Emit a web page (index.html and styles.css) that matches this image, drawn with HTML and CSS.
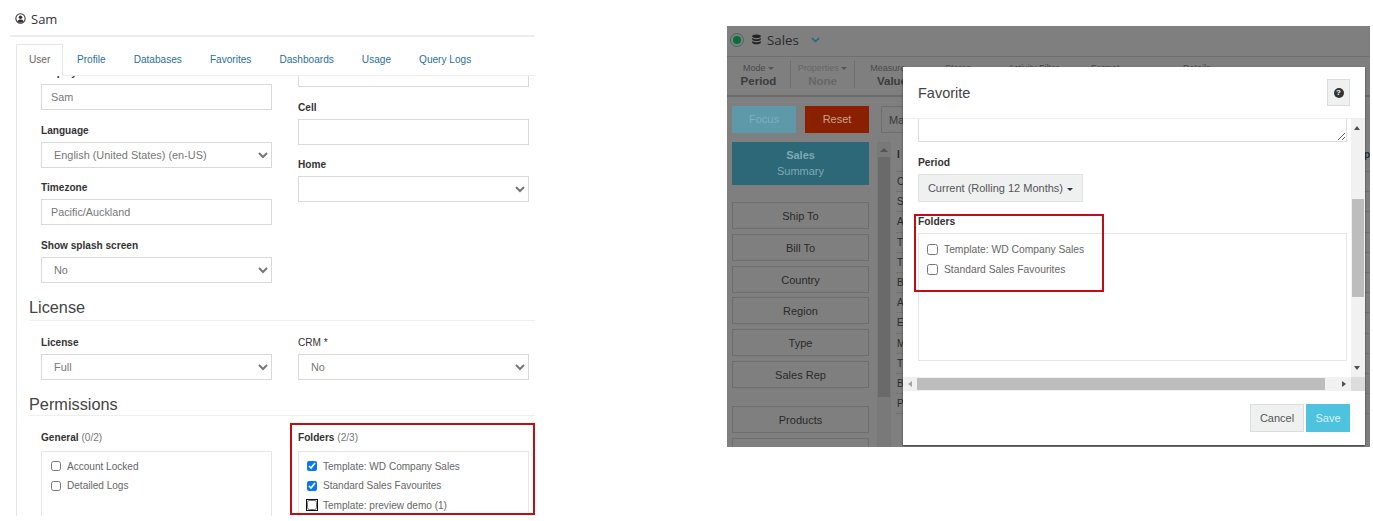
FILE: index.html
```html
<!DOCTYPE html>
<html>
<head>
    <title>User and Favorite</title>
    <link rel="stylesheet" href="styles.css">
</head>
<body>
    <div class="user-panel">
        <div class="user-title">
            <svg class="user-icon" viewBox="0 0 16 16"><circle cx="8" cy="8" r="6.8" fill="none" stroke="#333" stroke-width="1.5"/><circle cx="8" cy="6.2" r="2.6" fill="#333"/><path d="M3.4 12.4c1-2 2.6-2.9 4.6-2.9s3.600.9 4.600 2.900c-1.300 1.100-2.800 1.700-4.600 1.700s-3.300-.6-4.600-1.700z" fill="#333"/></svg>
            <span>Sam</span>
        </div>
        <div class="tabs">
            <a class="tab active">User</a>
            <a class="tab">Profile</a>
            <a class="tab">Databases</a>
            <a class="tab">Favorites</a>
            <a class="tab">Dashboards</a>
            <a class="tab">Usage</a>
            <a class="tab">Query Logs</a>
        </div>
        <div class="tab-pane">
            <div class="pane-inner">
                <div class="form-row first-row">
                    <div class="form-col">
                        <div class="field"><label>Display name</label><input type="text" value="Sam"></div>
                        <div class="field"><label>Language</label><select><option>English (United States) (en-US)</option></select></div>
                        <div class="field"><label>Timezone</label><input type="text" value="Pacific/Auckland"></div>
                        <div class="field"><label>Show splash screen</label><select><option>No</option></select></div>
                    </div>
                    <div class="form-col right-col">
                        <div class="field"><label>Phone</label><input type="text"></div>
                        <div class="field"><label>Cell</label><input type="text"></div>
                        <div class="field"><label>Home</label><select><option></option></select></div>
                    </div>
                </div>
                <h2 class="section-title license-title">License</h2>
                <div class="form-row">
                    <div class="form-col">
                        <div class="field"><label>License</label><select><option>Full</option></select></div>
                    </div>
                    <div class="form-col">
                        <div class="field"><label class="plain">CRM *</label><select><option>No</option></select></div>
                    </div>
                </div>
                <h2 class="section-title">Permissions</h2>
                <div class="form-row">
                    <div class="form-col">
                        <label class="list-label">General <span>(0/2)</span></label>
                        <div class="check-list">
                            <div class="check-row"><input type="checkbox"><span>Account Locked</span></div>
                            <div class="check-row"><input type="checkbox"><span>Detailed Logs</span></div>
                        </div>
                    </div>
                    <div class="form-col folders-col">
                        <label class="list-label">Folders <span>(2/3)</span></label>
                        <div class="check-list">
                            <div class="check-row"><input type="checkbox" checked><span>Template: WD Company Sales</span></div>
                            <div class="check-row"><input type="checkbox" checked><span>Standard Sales Favourites</span></div>
                            <div class="check-row"><input type="checkbox" class="focused"><span>Template: preview demo (1)</span></div>
                        </div>
                        <div class="red-box"></div>
                    </div>
                </div>
            </div>
        </div>
    </div>

    <div class="app-panel">
        <div class="app-header">
            <span class="status-dot"></span>
            <svg class="db-icon" viewBox="0 0 14 14"><ellipse cx="7" cy="2.800" rx="5.500" ry="2.300" fill="#222"/><path d="M1.500 5v1.600c0 1.300 2.500 2.300 5.500 2.300s5.500-1 5.500-2.300V5c-1.100 1-3.200 1.600-5.500 1.600S2.600 6 1.500 5z" fill="#222"/><path d="M1.500 8.900v1.800c0 1.300 2.500 2.300 5.500 2.300s5.500-1 5.500-2.300V8.900c-1.100 1-3.200 1.600-5.500 1.600s-4.400-.6-5.500-1.600z" fill="#222"/></svg>
            <span class="app-name">Sales</span>
            <svg class="app-chevron" viewBox="0 0 10 6"><path d="M1 1l4 3.600L9 1" fill="none" stroke="#1f6f80" stroke-width="1.800"/></svg>
        </div>
        <div class="toolbar">
            <div class="tool"><small>Mode <i class="caret"></i></small><b>Period</b></div>
            <div class="tool faded"><small>Properties <i class="caret"></i></small><b>None</b></div>
            <div class="tool tool-measure"><small>Measure <i class="caret"></i></small><b>Value</b></div>
            <div class="tool tool-a"><small>Stores</small></div>
            <div class="tool tool-b"><small>Activity Filter</small></div>
            <div class="tool tool-c"><small>Format</small></div>
            <div class="tool tool-d"><small>Details</small></div>
        </div>
        <div class="app-body">
            <div class="side">
                <div class="side-top">
                    <button class="focus-btn">Focus</button>
                    <button class="reset-btn">Reset</button>
                </div>
                <div class="summary-card"><b>Sales</b><span>Summary</span></div>
                <div class="side-btn">Ship To</div>
                <div class="side-btn">Bill To</div>
                <div class="side-btn">Country</div>
                <div class="side-btn">Region</div>
                <div class="side-btn">Type</div>
                <div class="side-btn">Sales Rep</div>
                <div class="side-btn products">Products</div>
                <div class="side-btn"></div>
            </div>
            <div class="side-scroll"><i class="track-arrow"></i><div class="side-thumb"></div></div>
            <div class="main">
                <button class="map-btn">Map</button>
                <div class="grid">
                    <div class="grid-row grid-head"><span>I</span><span>p</span></div>
                    <div class="grid-row">C</div>
                    <div class="grid-row">S</div>
                    <div class="grid-row">A</div>
                    <div class="grid-row">T</div>
                    <div class="grid-row">T</div>
                    <div class="grid-row">B</div>
                    <div class="grid-row">A</div>
                    <div class="grid-row">E</div>
                    <div class="grid-row">M</div>
                    <div class="grid-row">T</div>
                    <div class="grid-row">B</div>
                    <div class="grid-row">P</div>
                </div>
            </div>
        </div>

        <div class="modal">
            <div class="modal-header">
                <span class="modal-title">Favorite</span>
                <button class="help-btn"><span class="help-icon">?</span></button>
            </div>
            <div class="modal-middle">
                <div class="modal-body">
                    <textarea class="notes"></textarea>
                    <label class="modal-label period-label">Period</label>
                    <button class="period-btn">Current (Rolling 12 Months) <i class="caret dark"></i></button>
                    <label class="modal-label folders-label">Folders</label>
                    <div class="folder-box">
                        <div class="check-row"><input type="checkbox"><span>Template: WD Company Sales</span></div>
                        <div class="check-row"><input type="checkbox"><span>Standard Sales Favourites</span></div>
                    </div>
                    <div class="red-box modal-red"></div>
                </div>
                <div class="v-scroll">
                    <i class="arrow-up"></i>
                    <div class="v-thumb"></div>
                    <i class="arrow-down"></i>
                </div>
            </div>
            <div class="h-scroll">
                <i class="arrow-left"></i>
                <div class="h-thumb"></div>
                <i class="arrow-right"></i>
                <div class="h-corner"></div>
            </div>
            <div class="modal-footer">
                <button class="cancel-btn">Cancel</button>
                <button class="save-btn">Save</button>
            </div>
        </div>
    </div>
</body>
</html>
```

FILE: styles.css
```css
body {
    font-family: "Liberation Sans", Arial, sans-serif;
    background-color: #fff;
    margin: 0;
    height: 521px;
    overflow: hidden;
    display: flex;
    align-items: flex-start;
    color: #333;
}

/* left: user form */
.user-panel {
    width: 525px;
    height: 516px;
    margin-left: 10px;
    flex: none;
    display: flex;
    flex-direction: column;
}
.user-title {
    border-bottom: 2px solid #eee;
    display: flex;
    align-items: center;
    padding-left: 5px;
    padding-top: 2px;
    box-sizing: border-box;
    height: 37px;
    font-family: "Open Sans", sans-serif;
    font-size: 13px;
    color: #333;
}
.user-icon {
    width: 11px;
    height: 11px;
    margin-right: 5px;
}
.tabs {
    display: flex;
    margin: 7px 0 0 6px;
    height: 31px;
    flex: none;
}
.tab {
    padding: 0 14px;
    line-height: 31px;
    font-size: 10.1px;
    color: #2a6f9e;
    box-sizing: border-box;
}
.tab.active {
    position: relative;
    z-index: 1;
    color: #666;
    border: 1px solid #e6e6e6;
    border-bottom: none;
    background-color: #fff;
    padding: 0 12px;
    width: 47px;
    height: 32px;
    line-height: 30px;
}
.tab-pane {
    flex: 1;
    border-left: 1px solid #e6e6e6;
    margin-left: 6px;
    overflow: hidden;
    border-top: 1px solid #eee;
}
.pane-inner {
    margin-top: -11px;
    padding-left: 24px;
}
.form-row {
    display: flex;
    gap: 26px;
}
.form-col {
    width: 231px;
    flex: none;
    position: relative;
}
.right-col {
    margin-top: -23px;
}
.field {
    margin-bottom: 12.7px;
    padding-top: 1px;
}
label {
    display: block;
    font-size: 10.1px;
    font-weight: bold;
    line-height: 14px;
    color: #333;
}
.field label {
    margin: 0 0 4px;
}
label.plain {
    font-weight: normal;
}
input[type="text"], select {
    display: block;
    width: 100%;
    height: 26px;
    box-sizing: border-box;
    border: 1px solid #d9d9d9;
    background-color: #fff;
    padding: 0 9px;
    font-family: inherit;
    font-size: 10.8px;
    color: #777;
    border-radius: 0;
}
select {
    padding: 0 8px;
    font-size: 10.9px;
}
.section-title {
    font-size: 16.3px;
    font-weight: normal;
    color: #444;
    margin: 2px 0 15px -12px;
    width: 506px;
    height: 21px;
    line-height: 20px;
    border-bottom: 1px solid #eee;
}
.license-title {
    margin: 1px 0 14px -12px;
    height: 23px;
}
.list-label {
    margin: 0 0 6px;
}
.list-label span {
    font-weight: normal;
    color: #777;
}
.check-list {
    border: 1px solid #e6e6e6;
    height: 110px;
    padding: 4px 9px;
    box-sizing: border-box;
}
.folders-col .check-list {
    padding-left: 8px;
}
.check-row {
    display: flex;
    align-items: center;
    height: 19.5px;
    font-size: 10.05px;
    color: #666;
}
.check-row input {
    width: 10px;
    height: 10px;
    margin: 0 6px 0 0;
    accent-color: #0b76ef;
    flex: none;
}
.check-row input.focused {
    outline: 1.500px solid #111;
    border-radius: 2px;
}
.red-box {
    position: absolute;
    border: 2px solid #c00f14;
    pointer-events: none;
}
.folders-col .red-box {
    top: -8px;
    left: -8px;
    width: 245px;
    height: 92px;
    box-sizing: border-box;
}

/* right: app with dialog */
.app-panel {
    position: relative;
    margin: 26px 0 0 192px;
    width: 643px;
    height: 421px;
    background-color: #7f7f7f;
    flex: none;
    overflow: hidden;
    color: #2a2a2a;
}
.app-header {
    height: 31px;
    display: flex;
    align-items: center;
    padding: 0 0 3px 3px;
    box-sizing: border-box;
    border-bottom: 1px solid #6f6f6f;
    font-family: "Open Sans", sans-serif;
}
.status-dot {
    width: 8px;
    height: 8px;
    border-radius: 50%;
    background-color: #0d6b40;
    border: 2px solid #7f7f7f;
    outline: 1px solid #3f6f58;
    margin-right: 8px;
    margin-left: 1px;
}
.db-icon {
    width: 11px;
    height: 11px;
    margin-right: 5px;
}
.app-name {
    font-size: 13.3px;
    color: #2a2a2a;
    margin-right: 12px;
}
.app-chevron {
    width: 9px;
    height: 6px;
}
.toolbar {
    height: 38px;
    border-bottom: 2px solid #6c6c6c;
    display: flex;
    position: relative;
}
.tool {
    display: flex;
    flex-direction: column;
    align-items: center;
    padding-top: 3px;
    width: 64px;
    font-size: 9.500px;
    border-right: 1px solid #707070;
    height: 28px;
    margin-top: 3px;
    color: #3c3c3c;
    box-sizing: border-box;
}
.tool small {
    font-size: 9px;
    line-height: 11px;
    color: #4a4a4a;
    white-space: nowrap;
}
.tool b {
    font-size: 11.500px;
    line-height: 15px;
}
.tool.faded, .tool.faded small {
    color: #666;
}
.tool-measure, .tool-a, .tool-b, .tool-c, .tool-d {
    border-right: none;
}
.tool-measure {
    width: 74px;
}
.tool-a, .tool-b, .tool-c, .tool-d {
    align-items: flex-start;
}
.tool-a {
    width: 79px;
    padding-left: 16px;
}
.tool-b {
    width: 83px;
}
.tool-c {
    width: 92px;
}
.caret {
    display: inline-block;
    width: 0;
    height: 0;
    border-left: 3px solid transparent;
    border-right: 3px solid transparent;
    border-top: 3px solid #555;
    vertical-align: middle;
}
.caret.dark {
    border-top-color: #333;
    margin-left: 1px;
}
.app-body {
    display: flex;
    padding: 9px 0 0 5px;
}
.side {
    width: 137px;
    flex: none;
}
.side-top {
    display: flex;
    justify-content: space-between;
    margin-bottom: 9px;
}
.side-top button {
    width: 64px;
    height: 27px;
    border: none;
    padding: 0 0 2px;
    font-family: inherit;
    font-size: 11px;
}
.focus-btn {
    background-color: #5e99aa;
    color: #7fb0bf;
}
.reset-btn {
    background-color: #8a2000;
    color: #c9a091;
}
.summary-card {
    height: 43px;
    background-color: #2c6878;
    color: #80a9b4;
    font-size: 11px;
    display: flex;
    flex-direction: column;
    align-items: center;
    justify-content: center;
    line-height: 16px;
    padding-bottom: 2px;
    box-sizing: border-box;
    margin-bottom: 17px;
}
.side-btn {
    height: 27px;
    line-height: 27px;
    border: 1px solid #6e6e6e;
    box-sizing: border-box;
    text-align: center;
    font-size: 11px;
    color: #2a2a2a;
    margin-bottom: 4.800px;
}
.side-btn.products {
    margin-top: 18px;
}
.side-scroll {
    width: 14px;
    margin: 36px 0 0 8px;
    height: 400px;
    background-color: #797979;
    flex: none;
    position: relative;
}
.track-arrow {
    position: absolute;
    left: 3px;
    top: 6px;
    border-left: 4px solid transparent;
    border-right: 4px solid transparent;
    border-bottom: 4px solid #555;
}
.side-thumb {
    position: absolute;
    left: 1px;
    top: 15px;
    width: 12px;
    height: 240px;
    background-color: #6a6a6a;
}
.main {
    margin-left: 5px;
    flex: 1;
}
.map-btn {
    display: block;
    width: 60px;
    height: 27px;
    border: 1px solid #6e6e6e;
    background-color: #7f7f7f;
    font-family: inherit;
    font-size: 11px;
    color: #3c3c3c;
    text-align: left;
    padding-left: 7px;
    margin: 0 0 9px -15px;
}
.grid-row {
    height: 20.200px;
    line-height: 19px;
    border-bottom: 1px solid #717171;
    box-sizing: border-box;
    font-size: 10px;
    padding-left: 1px;
    color: #2a2a2a;
    white-space: nowrap;
    overflow: hidden;
}
.grid-head {
    height: 30px;
    line-height: 26px;
    display: flex;
    justify-content: space-between;
    padding-right: 0;
    font-weight: bold;
}

.modal {
    position: absolute;
    left: 176px;
    top: 41px;
    width: 462px;
    height: 378px;
    background-color: #fff;
    box-shadow: 0 1px 2px rgba(0, 0, 0, 0.5);
    display: flex;
    flex-direction: column;
}
.modal-header {
    height: 52px;
    flex: none;
    display: flex;
    align-items: center;
    justify-content: space-between;
    padding: 0 15px;
    border-bottom: 1px solid #eee;
    box-sizing: border-box;
}
.modal-title {
    font-size: 14.500px;
    color: #444;
}
.help-btn {
    width: 23px;
    height: 27px;
    background-color: #eff1f1;
    border: 1px solid #ddd;
    padding: 0;
    display: flex;
    align-items: center;
    justify-content: center;
}
.help-icon {
    width: 10px;
    height: 10px;
    border-radius: 50%;
    background-color: #333;
    color: #fff;
    font-size: 8px;
    font-weight: bold;
    line-height: 10px;
    text-align: center;
}
.modal-middle {
    display: flex;
    height: 258px;
    flex: none;
}
.modal-body {
    flex: 1;
    position: relative;
    padding-left: 15px;
    overflow: hidden;
}
.notes {
    display: block;
    width: 429px;
    height: 40px;
    margin-top: -17px;
    box-sizing: border-box;
    border: 1px solid #ddd;
    outline: none;
}
.modal-label {
    font-size: 10.300px;
    margin-bottom: 4px;
}
.period-label {
    margin-top: 14px;
}
.folders-label {
    margin-top: 13px;
}
.period-btn {
    display: block;
    width: 165px;
    height: 28px;
    background-color: #eff1f1;
    border: 1px solid #e2e2e2;
    font-family: inherit;
    font-size: 11px;
    color: #555;
    padding: 0;
}
.folder-box {
    width: 429px;
    height: 128px;
    border: 1px solid #e6e6e6;
    box-sizing: border-box;
    padding: 6px 8px;
}
.folder-box .check-row {
    font-size: 10.3px;
}
.folder-box input {
    width: 11px;
    height: 11px;
}
.modal-red {
    top: 95px;
    left: 11px;
    width: 190px;
    height: 78px;
    box-sizing: border-box;
}
.v-scroll {
    width: 14px;
    background-color: #f1f1f1;
    position: relative;
    flex: none;
}
.v-thumb {
    position: absolute;
    left: 1px;
    top: 80px;
    width: 12px;
    height: 98px;
    background-color: #bdbdbd;
}
.arrow-up, .arrow-down, .arrow-left, .arrow-right {
    position: absolute;
    width: 0;
    height: 0;
}
.arrow-up {
    top: 7px;
    left: 3px;
    border-left: 3.500px solid transparent;
    border-right: 3.500px solid transparent;
    border-bottom: 4px solid #505050;
}
.arrow-down {
    bottom: 7px;
    left: 3px;
    border-left: 3.500px solid transparent;
    border-right: 3.500px solid transparent;
    border-top: 4px solid #505050;
}
.h-scroll {
    height: 14px;
    flex: none;
    background-color: #f1f1f1;
    position: relative;
}
.arrow-left {
    left: 5px;
    top: 4px;
    border-top: 3px solid transparent;
    border-bottom: 3px solid transparent;
    border-right: 4px solid #a3a3a3;
}
.arrow-right {
    right: 19px;
    top: 4px;
    border-top: 3px solid transparent;
    border-bottom: 3px solid transparent;
    border-left: 4px solid #505050;
}
.h-thumb {
    position: absolute;
    left: 14px;
    top: 1px;
    width: 408px;
    height: 12px;
    background-color: #bdbdbd;
}
.h-corner {
    position: absolute;
    right: 0;
    top: 0;
    width: 14px;
    height: 14px;
    background-color: #dcdcdc;
}
.modal-footer {
    flex: 1;
    display: flex;
    justify-content: flex-end;
    gap: 2px;
    padding: 13px 15px 0 0;
}
.modal-footer button {
    height: 28px;
    font-family: inherit;
    font-size: 11px;
}
.cancel-btn {
    width: 54px;
    background-color: #eff1f1;
    border: 1px solid #ddd;
    color: #555;
}
.save-btn {
    width: 44px;
    background-color: #4dc3e0;
    border: none;
    color: #d8f1f7;
}
```
